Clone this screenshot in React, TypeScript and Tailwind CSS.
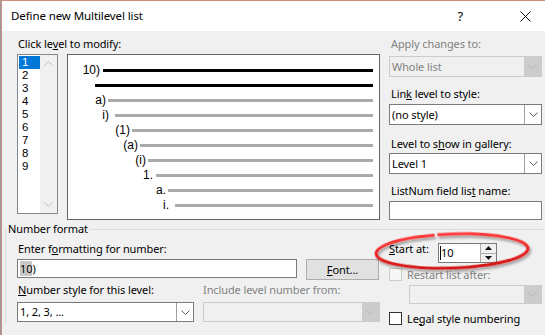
import React from 'react';

const rows = [
  { label: '10)', labelCls: 'w-[32px]', lineCls: 'ml-[3px] bg-black' },
  { label: '', labelCls: 'w-[27px]', lineCls: 'ml-0 bg-black' },
  { label: 'a)', labelCls: 'w-[38px]', lineCls: 'ml-[2px] bg-[#aaaaaa]' },
  { label: 'i)', labelCls: 'w-[41px]', lineCls: 'ml-[6px] bg-[#aaaaaa]' },
  { label: '(1)', labelCls: 'w-[62px]', lineCls: 'ml-[2px] bg-[#aaaaaa]' },
  { label: '(a)', labelCls: 'w-[70px]', lineCls: 'ml-[2px] bg-[#aaaaaa]' },
  { label: '(i)', labelCls: 'w-[78px]', lineCls: 'ml-[2px] bg-[#aaaaaa]' },
  { label: '1.', labelCls: 'w-[85px]', lineCls: 'ml-[3px] bg-[#aaaaaa]' },
  { label: 'a.', labelCls: 'w-[98px]', lineCls: 'ml-[2px] bg-[#aaaaaa]' },
  { label: 'i.', labelCls: 'w-[101px]', lineCls: 'ml-[6px] bg-[#aaaaaa]' },
];

function Chevron({ disabled }: { disabled?: boolean }) {
  return (
    <svg width="9" height="5" viewBox="0 0 9 5" fill="none">
      <path d="M0.5 0.5L4.5 4.5L8.5 0.5" stroke={disabled ? '#b4b4b4' : '#606060'} />
    </svg>
  );
}

function Combo({ value, disabled, className }: { value?: string; disabled?: boolean; className: string }) {
  return (
    <div
      className={`flex border ${
        disabled ? 'border-[#cccccc] bg-[#f0f0f0] text-[#838383]' : 'border-[#7a7a7a] bg-white text-black'
      } ${className}`}
    >
      <div className="flex flex-1 items-center pl-[2px]">{value}</div>
      <div
        className={`flex w-[17px] items-center justify-center ${
          disabled ? 'bg-[#cccccc]' : 'border-l border-[#a0a0a0]'
        }`}
      >
        <Chevron disabled={disabled} />
      </div>
    </div>
  );
}

function Checkbox({ disabled }: { disabled?: boolean }) {
  return (
    <div
      className={`h-[13px] w-[13px] border ${
        disabled ? 'border-[#cccccc] bg-[#f7f7f7]' : 'border-[#333333] bg-white'
      }`}
    />
  );
}

export default function App() {
  return (
    <div className="h-[335px] w-[545px] overflow-hidden bg-[#9a9a9a] pl-px">
      <div className="relative h-full border-l border-t border-[#cf8c78] bg-[#f0f0f0] font-['Noto_Sans',sans-serif] text-[11px] leading-[16px] tracking-[-0.1px] text-black">
        {/* Title bar */}
        <div className="flex h-[30px] items-center bg-white pl-[9px]">
          <span className="text-[11.5px]">Define new Multilevel list</span>
          <span className="ml-auto text-[13px]">?</span>
          <svg className="ml-[57px] mr-[14px]" width="11" height="11" viewBox="0 0 11 11">
            <path d="M0.5 0.5L10.5 10.5M10.5 0.5L0.5 10.5" stroke="#111" strokeWidth="1" />
          </svg>
        </div>

        {/* Top section */}
        <div className="flex pl-[15px] pt-[5px]">
          <div className="w-[363px]">
            <div className="h-[16px] pl-px">
              Click le<u>v</u>el to modify:
            </div>
            <div className="mt-[2px] flex">
              {/* Level list */}
              <div className="flex h-[160px] w-[41px] border border-[#828790] bg-white">
                <div className="w-[22px] pl-px pt-px font-['Liberation_Sans',Arial,sans-serif] tracking-normal">
                  {[1, 2, 3, 4, 5, 6, 7, 8, 9].map((n) => (
                    <div
                      key={n}
                      className={`h-[13px] pl-[3px] text-[11.5px] leading-[13px] ${
                        n === 1 ? 'bg-[#0078d7] text-white' : 'text-black'
                      }`}
                    >
                      {n}
                    </div>
                  ))}
                </div>
                <div className="flex w-[17px] flex-col justify-between bg-[#f0f0f0]">
                  <div className="flex h-[17px] items-center justify-center">
                    <svg width="9" height="5" viewBox="0 0 9 5" fill="none">
                      <path d="M0.5 4.5L4.5 0.5L8.5 4.5" stroke="#c2c2c2" />
                    </svg>
                  </div>
                  <div className="flex h-[17px] items-center justify-center">
                    <svg width="9" height="5" viewBox="0 0 9 5" fill="none">
                      <path d="M0.5 0.5L4.5 4.5L8.5 0.5" stroke="#c2c2c2" />
                    </svg>
                  </div>
                </div>
              </div>

              {/* Preview */}
              <div className="ml-[9px] h-[166px] w-[313px] border border-[#646464] bg-white pr-[6px] pt-[8px] font-['Liberation_Sans',Arial,sans-serif] text-[12px] tracking-normal">
                {rows.map((r, i) => (
                  <div key={i} className="flex h-[15px] items-center">
                    <div className={`shrink-0 text-right leading-[15px] ${r.labelCls}`}>{r.label}</div>
                    <div className={`h-[3px] flex-1 ${r.lineCls}`} />
                  </div>
                ))}
              </div>
            </div>
          </div>

          {/* Right column */}
          <div className="ml-[9px] w-[153px]">
            <div className="h-[16px] pl-[2px] text-[#838383]">Apply changes to:</div>
            <Combo className="mt-[4px] h-[21px]" value="Whole list" disabled />
            <div className="mt-[9px] h-[16px] pl-[2px]">
              Lin<u>k</u> level to style:
            </div>
            <Combo className="mt-[2px] h-[21px]" value="(no style)" />
            <div className="mt-[11px] h-[16px] pl-[2px]">
              Level to s<u>h</u>ow in gallery:
            </div>
            <Combo className="mt-px h-[21px]" value="Level 1" />
            <div className="mt-[9px] h-[16px] pl-[2px]">
              ListNum field lis<u>t</u> name:
            </div>
            <div className="mt-[2px] h-[19px] border border-[#7a7a7a] bg-white" />
          </div>
        </div>

        {/* Number format group */}
        <div className="ml-[3px] mt-[9px] border-l border-t border-[#dcdcdc] pl-[11px]">
          <div className="-ml-[10px] -mt-[9px] h-[16px] w-fit bg-[#f0f0f0] pl-px pr-[2px]">Number format</div>
          <div className="mt-[4px] flex">
            <div className="w-[363px]">
              <div className="h-[16px] pl-px">
                Enter f<u>o</u>rmatting for number:
              </div>
              <div className="mt-[2px] flex items-start">
                <div className="flex h-[19px] w-[280px] items-center border border-[#7a7a7a] bg-white pl-[2px]">
                  <span className="bg-[#c8c8c8] leading-[15px]">10</span>
                  <span className="leading-[15px]">)</span>
                </div>
                <div className="ml-[9px] flex h-[21px] w-[73px] items-center justify-center border border-[#adadad] bg-[#e1e1e1]">
                  <span>
                    <u>F</u>ont...
                  </span>
                </div>
              </div>
              <div className="mt-[2px] flex h-[16px]">
                <div className="w-[186px] pl-px">
                  <u>N</u>umber style for this level:
                </div>
                <div className="text-[#838383]">Include level number from:</div>
              </div>
              <div className="mt-[4px] flex">
                <Combo className="h-[20px] w-[177px]" value="1, 2, 3, ..." />
                <Combo className="ml-[9px] h-[20px] w-[177px]" disabled />
              </div>
            </div>

            <div className="ml-[9px] w-[153px]">
              <div className="flex items-start">
                <div className="h-[16px] w-[49px]">
                  <u>S</u>tart at:
                </div>
                <div className="mt-[2px] flex h-[20px] w-[59px] border border-[#7a7a7a] bg-white">
                  <div className="flex flex-1 items-center pl-[1px]">
                    <span className="h-[14px] w-px bg-black" />
                    <span>10</span>
                  </div>
                  <div className="flex w-[16px] flex-col border-l border-[#adadad] bg-[#f0f0f0]">
                    <div className="flex flex-1 items-center justify-center border-b border-[#adadad]">
                      <svg width="7" height="4" viewBox="0 0 7 4">
                        <path d="M0 4L3.5 0L7 4Z" fill="#111" />
                      </svg>
                    </div>
                    <div className="flex flex-1 items-center justify-center">
                      <svg width="7" height="4" viewBox="0 0 7 4">
                        <path d="M0 0L3.5 4L7 0Z" fill="#111" />
                      </svg>
                    </div>
                  </div>
                </div>
              </div>
              <div className="mt-[5px] flex h-[13px] items-center">
                <Checkbox disabled />
                <span className="ml-[5px] text-[#838383]">Restart list after:</span>
              </div>
              <Combo className="ml-[20px] mt-[4px] h-[19px] w-[133px]" disabled />
              <div className="mt-[8px] flex h-[13px] items-center">
                <Checkbox />
                <span className="ml-[5px]">
                  Le<u>g</u>al style numbering
                </span>
              </div>
            </div>
          </div>
        </div>

        {/* Red highlight ellipse */}
        <svg
          className="pointer-events-none absolute left-[370px] top-[228px]"
          width="162"
          height="46"
          viewBox="0 0 162 46"
          fill="none"
        >
          <defs>
            <filter id="sh" x="-10%" y="-30%" width="120%" height="160%">
              <feDropShadow dx="1.5" dy="2.5" stdDeviation="1.2" floodColor="#000" floodOpacity="0.35" />
            </filter>
            <linearGradient id="rg" x1="0" y1="0" x2="0" y2="1">
              <stop offset="0" stopColor="#ff3b3b" />
              <stop offset="1" stopColor="#d41414" />
            </linearGradient>
          </defs>
          <g transform="rotate(-2 80 22)" filter="url(#sh)">
            <path d="M66 5.29A76 17 0 1 1 63 5.43" stroke="url(#rg)" strokeWidth="3" />
          </g>
        </svg>
      </div>
    </div>
  );
}
